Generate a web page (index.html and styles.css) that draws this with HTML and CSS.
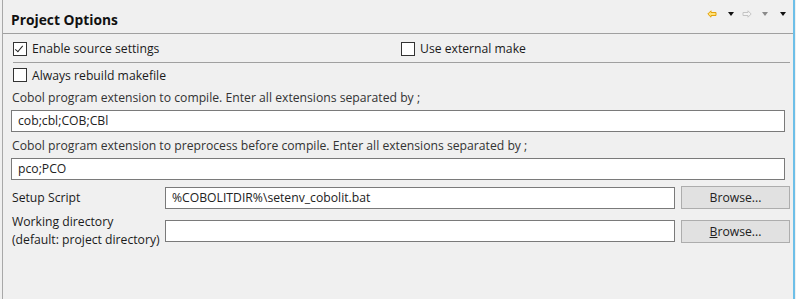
FILE: index.html
```html
<!DOCTYPE html>
<html lang="en">
<head>
  <meta charset="UTF-8" />
  <title>Project Options</title>
  <link rel="stylesheet" href="styles.css">
</head>
<body>

<div class="panel">
  <div class="header">
    <h2>Project Options</h2>
    <div class="toolbar">
      <svg class="nav back" width="10" height="8" viewBox="0 0 10 8">
        <path d="M0.8 4 L4 0.8 L4 2.5 L9 2.5 L9 5.5 L4 5.5 L4 7.2 Z" fill="#ffe27a" stroke="#e3a20c" stroke-width="1"/>
      </svg>
      <span class="tri t1"></span>
      <svg class="nav fwd" width="10" height="8" viewBox="0 0 10 8">
        <path d="M9.2 4 L6 0.8 L6 2.5 L1 2.5 L1 5.5 L6 5.5 L6 7.2 Z" fill="#f4f4f4" stroke="#c4c4c4" stroke-width="1"/>
      </svg>
      <span class="tri off"></span>
      <span class="tri t3"></span>
    </div>
  </div>

  <div class="checks top">
    <label class="check"><span class="box on"></span>Enable source settings</label>
    <label class="check"><span class="box"></span>Use external make</label>
  </div>
  <div class="checks second">
    <label class="check"><span class="box"></span>Always rebuild makefile</label>
  </div>

  <div class="field">
    <p>Cobol program extension to compile. Enter all extensions separated by ;</p>
    <div class="input">cob;cbl;COB;CBl</div>
  </div>
  <div class="field next">
    <p>Cobol program extension to preprocess before compile. Enter all extensions separated by ;</p>
    <div class="input">pco;PCO</div>
  </div>

  <div class="row">
    <span class="label">Setup Script</span>
    <div class="input">%COBOLITDIR%\setenv_cobolit.bat</div>
    <button>Browse...</button>
  </div>
  <div class="row">
    <span class="label">Working directory<br>(default: project directory)</span>
    <div class="input"></div>
    <button><u>B</u>rowse...</button>
  </div>
</div>

</body>
</html>
```
FILE: styles.css
```css
body {
  margin: 0;
  background: #f0f0f0;
  font-family: "Open Sans", "Noto Sans", sans-serif;
  font-size: 12.2px;
  color: #1b1b1b;
}
.panel {
  margin-left: 2px;
  width: 793px;
  height: 299px;
  box-sizing: border-box;
  border-left: 1px solid #a8a8a8;
  border-right: 2px solid #6dbfe8;
}
.header {
  display: flex;
  align-items: center;
  height: 33px;
  border-bottom: 1px solid #a0a0a0;
  padding: 0 7px 0 8px;
}
.header h2 {
  margin: 6px 0 0;
  font-size: 13.8px;
  font-weight: bold;
  color: #111;
}
.toolbar {
  margin-left: auto;
  display: flex;
  align-items: center;
  margin-top: -6px;
}
.nav { display: block; }
.tri {
  width: 0;
  height: 0;
  border-left: 3px solid transparent;
  border-right: 3px solid transparent;
  border-top: 4px solid #111;
}
.t1 { margin-left: 11px; }
.fwd { margin-left: 8px; }
.tri.off { border-top-color: #8a8a8a; margin-left: 10px; }
.t3 { margin-left: 12px; }

.checks {
  display: grid;
  grid-template-columns: 388px 1fr;
  margin: 0 3px 0 10px;
  height: 27px;
  align-items: center;
}
.checks.top {
  margin-top: 1px;
  border-bottom: 1px solid #a0a0a0;
}
.checks.second { height: 24px; }
.check {
  display: flex;
  align-items: center;
  gap: 5px;
}
.box {
  width: 12px;
  height: 12px;
  border: 1px solid #333;
  background: #fff;
  position: relative;
}
.box.on::after {
  content: "";
  position: absolute;
  left: 3px;
  top: 1px;
  width: 3px;
  height: 7px;
  border: solid #222;
  border-width: 0 1px 1px 0;
  transform: rotate(40deg);
}

.field { margin: 0 8px; }
.field p {
  margin: 0;
  height: 22px;
  line-height: 22px;
  padding-left: 1px;
  color: #333;
}
.field.next p {
  height: 26px;
  line-height: 28px;
}
.input {
  height: 20px;
  border: 1px solid #7a7a7a;
  background: #fff;
  line-height: 20px;
  padding-left: 6px;
  color: #222;
}
.field .input { margin-top: 1px; }
.field.next .input { margin-top: 0; }

.row {
  display: grid;
  grid-template-columns: 148px 510px 109px;
  column-gap: 6px;
  align-items: center;
  margin: 6px 0 0 8px;
}
.row + .row { margin-top: 4px; }
.row .label {
  line-height: 18px;
  padding-left: 1px;
  white-space: nowrap;
}
button {
  height: 23px;
  margin: 0;
  background: #e1e1e1;
  border: 1px solid #adadad;
  font: inherit;
  color: #222;
  padding: 0;
}
```
